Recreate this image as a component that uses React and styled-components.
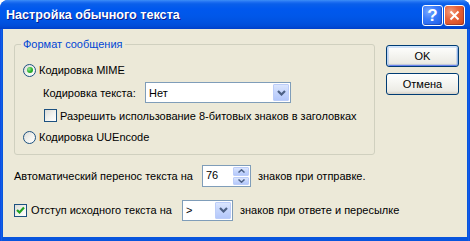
import React from 'react';
import styled, { createGlobalStyle } from 'styled-components';

const GlobalStyle = createGlobalStyle`
  html, body { margin: 0; padding: 0; background: #ffffff; }
  body {
    font-family: Tahoma, "Liberation Sans", Arial, sans-serif;
    font-size: 11px;
    color: #000;
  }
  * { box-sizing: border-box; }
`;

const Window = styled.div`
  width: 470px;
  height: 241px;
  display: flex;
  flex-direction: column;
  background: linear-gradient(to right, #0831d9 0, #166aee 1px, #0855dd 2px, #0855dd 468px, #166aee 469px, #0831d9 470px);
  border-radius: 8px 8px 0 0;
  overflow: hidden;
`;

const TitleBar = styled.div`
  height: 29px;
  flex: none;
  display: flex;
  align-items: center;
  padding: 1px 5px 0 6px;
  background: linear-gradient(
    to bottom,
    #3d8ef7 0px,
    #1f6ff2 2px,
    #0a5fea 4px,
    #0058ee 9px,
    #0057e9 16px,
    #0052e1 22px,
    #004cd8 26px,
    #003fc9 29px
  );
`;

const TitleText = styled.div`
  flex: 1;
  color: #ffffff;
  font-family: "Liberation Sans", Arial, sans-serif;
  font-weight: bold;
  font-size: 12.6px;
  text-shadow: 1px 1px 0 #0a1b8a;
`;

const TitleButtons = styled.div`
  display: flex;
  gap: 1px;
`;

const CaptionButton = styled.div`
  width: 21px;
  height: 21px;
  border: 1px solid #ffffff;
  border-radius: 3px;
  display: flex;
  align-items: center;
  justify-content: center;
  background: ${(p) =>
    p.$close
      ? 'radial-gradient(circle at 30% 30%, #f39c7c 0, #e8643c 40%, #d24518 100%)'
      : 'radial-gradient(circle at 30% 30%, #7aa8ff 0, #3c7dfb 40%, #1c5ae6 100%)'};
  box-shadow: inset -1px -1px 0 rgba(0, 0, 60, 0.25);
`;

const HelpGlyph = styled.span`
  color: #ffffff;
  font-family: "Liberation Sans", Arial, sans-serif;
  font-weight: bold;
  font-size: 17px;
  line-height: 1;
  margin-top: 1px;
`;

const Client = styled.div`
  flex: 1;
  margin: 0 3px 4px 3px;
  background: #ece9d8;
  padding: 15px 8px 0 11px;
`;

const TopRow = styled.div`
  display: flex;
  align-items: flex-start;
  gap: 11px;
`;

const GroupBox = styled.div`
  position: relative;
  width: 361px;
  height: 111px;
  border: 1px solid #d0d0bf;
  border-radius: 3px;
  padding: 15px 0 0 8px;
`;

const Legend = styled.span`
  position: absolute;
  top: -7px;
  left: 6px;
  padding: 0 2px;
  line-height: 13px;
  background: #ece9d8;
  color: #0046d5;
`;

const Row = styled.div`
  display: flex;
  align-items: center;
  height: ${(p) => p.$h || 20}px;
  margin-top: ${(p) => p.$mt || 0}px;
  padding-left: ${(p) => p.$pl || 0}px;
`;

const Label = styled.span`
  white-space: nowrap;
  width: ${(p) => (p.$w ? `${p.$w}px` : 'auto')};
  margin-left: ${(p) => p.$ml || 0}px;
  flex: none;
`;

const Radio = styled.span`
  width: 13px;
  height: 13px;
  flex: none;
  border-radius: 50%;
  border: 1px solid #1c5180;
  background: linear-gradient(135deg, #dcdcd7 0%, #f3f3ef 55%, #ffffff 100%);
  display: flex;
  align-items: center;
  justify-content: center;
  &::after {
    content: '';
    display: ${(p) => (p.$checked ? 'block' : 'none')};
    width: 6px;
    height: 6px;
    border-radius: 50%;
    background: radial-gradient(circle at 35% 35%, #9be89b 0, #2fb52f 50%, #168a16 100%);
  }
`;

const CheckBox = styled.span`
  width: 13px;
  height: 13px;
  flex: none;
  border: 1px solid #1c5180;
  background: linear-gradient(135deg, #dcdcd7 0%, #f3f3ef 55%, #ffffff 100%);
  display: flex;
  align-items: center;
  justify-content: center;
`;

const Combo = styled.div`
  width: ${(p) => p.$w}px;
  height: 21px;
  flex: none;
  border: 1px solid #7f9db9;
  background: #ffffff;
  display: flex;
  align-items: stretch;
`;

const ComboValue = styled.span`
  flex: 1;
  display: flex;
  align-items: center;
  padding-left: 3px;
  white-space: nowrap;
`;

const DropButton = styled.span`
  width: 16px;
  margin: 1px;
  flex: none;
  border: 1px solid #bccdf9;
  border-radius: 1px;
  background: linear-gradient(to bottom, #dbe6fe 0%, #c5d5fc 50%, #b4c8fb 100%);
  display: flex;
  align-items: center;
  justify-content: center;
`;

const SpinBox = styled.div`
  width: 49px;
  height: 22px;
  flex: none;
  border: 1px solid #7f9db9;
  background: #ffffff;
  display: flex;
  align-items: stretch;
`;

const SpinValue = styled.span`
  flex: 1;
  padding: 3px 0 0 3px;
`;

const SpinButtons = styled.span`
  width: 16px;
  margin: 1px;
  flex: none;
  display: flex;
  flex-direction: column;
  gap: 1px;
`;

const SpinHalf = styled.span`
  flex: 1;
  border: 1px solid #bccdf9;
  border-radius: 1px;
  background: linear-gradient(to bottom, #dbe6fe 0%, #c5d5fc 50%, #b4c8fb 100%);
  display: flex;
  align-items: center;
  justify-content: center;
`;

const ButtonColumn = styled.div`
  display: flex;
  flex-direction: column;
  gap: 6px;
  padding-top: 1px;
`;

const Button = styled.div`
  width: 73px;
  height: 22px;
  border: 1px solid #003c74;
  border-radius: 3px;
  background: linear-gradient(to bottom, #ffffff 0%, #f6f6f2 40%, #ecebe5 85%, #d6d0c5 100%);
  display: flex;
  align-items: center;
  justify-content: center;
  box-shadow: ${(p) =>
    p.$default
      ? 'inset 0 1px 0 #cee7ff, inset 1px 0 0 #bcd4f6, inset -1px 0 0 #89ade4, inset 0 -1px 0 #6982ee, inset 0 0 0 2px rgba(137, 173, 228, 0.35)'
      : 'none'};
`;

const BottomRow = styled(Row)`
  padding-left: 0;
`;

const Chevron = () => (
  <svg width="9" height="6" viewBox="0 0 9 6">
    <polyline points="1,1 4.5,4.5 8,1" fill="none" stroke="#4d6185" strokeWidth="2.2" />
  </svg>
);

const SmallArrow = ({ up }) => (
  <svg width="7" height="4" viewBox="0 0 7 4">
    <polyline
      points={up ? '0.5,3.5 3.5,0.8 6.5,3.5' : '0.5,0.5 3.5,3.2 6.5,0.5'}
      fill="none"
      stroke="#4d6185"
      strokeWidth="1.5"
    />
  </svg>
);

const CheckMark = () => (
  <svg width="9" height="9" viewBox="0 0 9 9">
    <polyline points="1,4 3.5,6.5 8,1.5" fill="none" stroke="#21a121" strokeWidth="2.2" />
  </svg>
);

const CloseX = () => (
  <svg width="11" height="11" viewBox="0 0 11 11">
    <path d="M1.5 1.5 L9.5 9.5 M9.5 1.5 L1.5 9.5" stroke="#ffffff" strokeWidth="2" />
  </svg>
);

const App = () => (
  <>
    <GlobalStyle />
    <Window>
      <TitleBar>
        <TitleText>Настройка обычного текста</TitleText>
        <TitleButtons>
          <CaptionButton>
            <HelpGlyph>?</HelpGlyph>
          </CaptionButton>
          <CaptionButton $close>
            <CloseX />
          </CaptionButton>
        </TitleButtons>
      </TitleBar>
      <Client>
        <TopRow>
          <GroupBox>
            <Legend>Формат сообщения</Legend>
            <Row $h={20}>
              <Radio $checked />
              <Label $ml={3}>Кодировка MIME</Label>
            </Row>
            <Row $h={21} $mt={2} $pl={20}>
              <Label $w={102}>Кодировка текста:</Label>
              <Combo $w={146}>
                <ComboValue>Нет</ComboValue>
                <DropButton>
                  <Chevron />
                </DropButton>
              </Combo>
            </Row>
            <Row $h={19} $mt={3} $pl={21}>
              <CheckBox />
              <Label $ml={3}>Разрешить использование 8-битовых знаков в заголовках</Label>
            </Row>
            <Row $h={20} $mt={2}>
              <Radio />
              <Label $ml={3}>Кодировка UUEncode</Label>
            </Row>
          </GroupBox>
          <ButtonColumn>
            <Button $default>OK</Button>
            <Button>Отмена</Button>
          </ButtonColumn>
        </TopRow>
        <BottomRow $h={22} $mt={10}>
          <Label $w={188}>Автоматический перенос текста на</Label>
          <SpinBox>
            <SpinValue>76</SpinValue>
            <SpinButtons>
              <SpinHalf>
                <SmallArrow up />
              </SpinHalf>
              <SpinHalf>
                <SmallArrow />
              </SpinHalf>
            </SpinButtons>
          </SpinBox>
          <Label $ml={7}>знаков при отправке.</Label>
        </BottomRow>
        <BottomRow $h={22} $mt={12}>
          <CheckBox>
            <CheckMark />
          </CheckBox>
          <Label $w={151} $ml={4}>Отступ исходного текста на</Label>
          <Combo $w={51}>
            <ComboValue>&gt;</ComboValue>
            <DropButton>
              <Chevron />
            </DropButton>
          </Combo>
          <Label $ml={7}>знаков при ответе и пересылке</Label>
        </BottomRow>
      </Client>
    </Window>
  </>
);

export default App;
